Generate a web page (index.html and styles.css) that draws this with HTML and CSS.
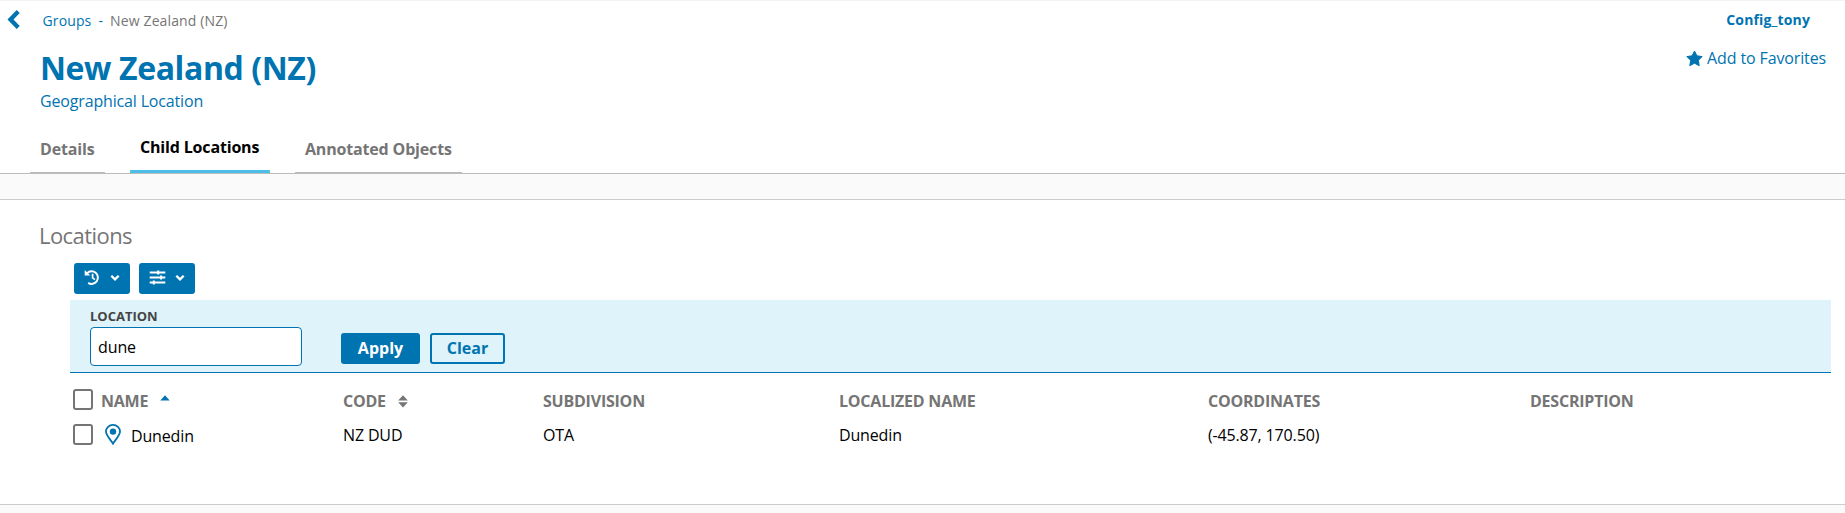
FILE: index.html
```html
<!DOCTYPE html>
<html lang="en">
<head>
<meta charset="utf-8">
<title>New Zealand (NZ)</title>
<link rel="stylesheet" href="styles.css">
</head>
<body>
<header class="page-header">
  <div class="topbar">
    <a class="back" aria-label="Back"><svg width="13" height="21" viewBox="0 0 13 21"><path d="M11.200 2.600 3.500 10.500l7.700 7.900" fill="none" stroke="currentColor" stroke-width="4.300"/></svg></a>
    <nav class="crumbs"><a>Groups</a><span class="dash">-</span><span class="current">New Zealand (NZ)</span></nav>
    <a class="user">Config_tony</a>
  </div>
  <div class="heading">
    <div>
      <h1 class="title">New Zealand (NZ)</h1>
      <div class="subtitle">Geographical Location</div>
    </div>
    <a class="favorite"><svg width="17" height="17" viewBox="0 0 17 17"><path d="M8.500 1 10.900 5.800 16.100 6.600 12.400 10.300 13.200 15.700 8.500 13.200 3.800 15.700 4.600 10.300 .9 6.600 6.100 5.800Z" fill="currentColor" stroke="currentColor" stroke-width="1" stroke-linejoin="round"/></svg>Add to Favorites</a>
  </div>
  <nav class="tabs">
    <a class="tab details">Details</a>
    <a class="tab children active">Child Locations</a>
    <a class="tab annotated">Annotated Objects</a>
  </nav>
</header>
<main class="panel">
  <h2 class="section-title">Locations</h2>
  <div class="toolbar">
    <button class="tool" aria-label="History"><svg width="17" height="17" viewBox="0 0 17 17"><path d="M3.100 4.200A6.300 6.300 0 1 1 4.200 13.900" fill="none" stroke="currentColor" stroke-width="2"/><path d="M.7 1v5.600h5.600Z" fill="currentColor"/><path d="M8.600 4.800v4l2.300 1.800" fill="none" stroke="currentColor" stroke-width="1.700"/></svg><svg class="chevron" width="10" height="8" viewBox="0 0 10 8"><path d="m1.300 1.700 3.700 3.600 3.700-3.600" fill="none" stroke="currentColor" stroke-width="2.300"/></svg></button>
    <button class="tool" aria-label="Filters"><svg width="17" height="17" viewBox="0 0 17 17"><path d="M.7 3.500h15.600M.7 8.500h15.600M.7 13.500h15.600" stroke="currentColor" stroke-width="1.800"/><path d="M9.200 1.600v3.800M12.100 6.600v3.800M4.800 11.600v3.800" stroke="currentColor" stroke-width="2"/></svg><svg class="chevron" width="10" height="8" viewBox="0 0 10 8"><path d="m1.300 1.700 3.700 3.600 3.700-3.600" fill="none" stroke="currentColor" stroke-width="2.300"/></svg></button>
  </div>
  <form class="filter">
    <div class="field">
      <label class="label" for="loc">LOCATION</label>
      <input class="input" id="loc" type="text" value="dune">
    </div>
    <button class="btn apply" type="button">Apply</button>
    <button class="btn clear" type="button">Clear</button>
  </form>
  <div class="table">
    <div class="row head">
      <div class="cell name"><span class="check"></span><span>NAME</span><svg class="asc" width="10" height="6" viewBox="0 0 10 6"><path d="M.3 5.500 5 .2l4.700 5.300Z" fill="currentColor"/></svg></div>
      <div class="cell">CODE<svg class="sort" width="10" height="13" viewBox="0 0 10 13"><path d="M.2 5.600 5 .2l4.800 5.400ZM.2 7.200h9.600L5 12.600Z" fill="currentColor"/></svg></div>
      <div class="cell">SUBDIVISION</div>
      <div class="cell">LOCALIZED NAME</div>
      <div class="cell">COORDINATES</div>
      <div class="cell">DESCRIPTION</div>
    </div>
    <div class="row">
      <div class="cell name"><span class="check"></span><svg class="pin" width="16" height="21" viewBox="0 0 16 21"><path d="M8 19.700C6.500 16.700 1 11.800 1 7.600a7 6.700 0 0 1 14 0c0 4.200-5.500 9.100-7 12.100Z" fill="none" stroke="currentColor" stroke-width="1.800"/><circle cx="8" cy="7.600" r="3.200" fill="currentColor"/></svg><span class="place">Dunedin</span></div>
      <div class="cell">NZ DUD</div>
      <div class="cell">OTA</div>
      <div class="cell">Dunedin</div>
      <div class="cell">(-45.87, 170.50)</div>
      <div class="cell"></div>
    </div>
  </div>
</main>
</body>
</html>
```
FILE: styles.css
```css
* { box-sizing: border-box; }
body {
  margin: 0;
  height: 513px;
  overflow: hidden;
  background: #fafafa;
  color: #000;
  font: 16px/22px "Open Sans", sans-serif;
}
h1, h2 { margin: 0; }
svg { display: block; flex: none; }
button { font: inherit; border: 0; margin: 0; padding: 0; }

.page-header {
  height: 174px;
  background: #fff;
  border-top: 1px solid #f3f3f3;
  border-bottom: 1px solid #bbb;
  color: #0073b1;
}
.topbar { display: flex; height: 45px; padding: 8px 35px 0 7px; }
.back { width: 35.5px; }
.crumbs { display: flex; font-size: 14px; line-height: 20px; padding-top: 2px; letter-spacing: .13px; }
.dash { margin: 0 7px; }
.current { color: #757575; }
.user { margin-left: auto; font-size: 14px; font-weight: 700; line-height: 20px; padding-top: 1px; letter-spacing: .15px; }
.heading { display: flex; justify-content: space-between; height: 86px; padding: 0 19px 0 40px; }
.title { font-size: 32px; line-height: 44px; font-weight: 700; letter-spacing: -.4px; }
.subtitle { line-height: 22px; letter-spacing: -.16px; }
.favorite { display: flex; gap: 4px; height: 22px; margin-top: 1px; letter-spacing: -.13px; }
.favorite svg { margin-top: 3px; }
.tabs { display: flex; align-items: flex-start; gap: 25px; padding-left: 30px; height: 41px; }
.tab {
  height: 41px;
  padding: 6px 10px 0;
  border-bottom: 1px solid #bbb;
  font-weight: 700;
  letter-spacing: -.17px;
  white-space: nowrap;
  color: #757575;
}
.details { width: 75px; }
.children { width: 140px; }
.annotated { width: 167px; }
.tab.active { padding-top: 4px; border-bottom: 3px solid #4dbde9; color: #000; }

.panel {
  height: 306px;
  margin-top: 25px;
  padding: 20px 14px 0 70px;
  background: #fff;
  border-top: 1px solid #ccc;
  border-bottom: 1px solid #ccc;
}
.section-title { margin-left: -31px; font-size: 22px; line-height: 30px; font-weight: 400; letter-spacing: -.56px; color: #757575; }
.toolbar { display: flex; gap: 9px; padding: 13px 4px 6px; }
.tool {
  display: flex;
  gap: 9px;
  width: 56px;
  height: 31px;
  padding: 6px 0 0 10px;
  border-radius: 3px;
  background: #0073b1;
  color: #fff;
}
.chevron { margin-top: 5px; }
.filter {
  display: flex;
  height: 73px;
  padding-left: 20px;
  background: #dff3fb;
  border-bottom: 1px solid #0073b1;
}
.field { width: 212px; margin-right: 39px; padding-top: 7px; }
.label { display: block; height: 20px; font-size: 13px; line-height: 18px; font-weight: 700; color: #444; }
.input {
  display: block;
  width: 212px;
  height: 39px;
  padding: 0 7px;
  border: 1px solid #0073b1;
  border-radius: 4px;
  background: #fff;
  font: inherit;
  letter-spacing: -.1px;
  color: #000;
}
.btn { height: 31px; margin-top: 33px; padding-bottom: 2px; border-radius: 3px; font-weight: 700; }
.apply { width: 79px; margin-right: 10px; background: #0073b1; color: #fff; }
.clear { width: 75px; border: 2px solid #0073b1; background: transparent; color: #0073b1; }

.table { padding-top: 16px; }
.row { display: grid; grid-template-columns: 273px 200px 296px 369px 322px 1fr; height: 35px; letter-spacing: -.15px; }
.head { color: #757575; font-weight: 700; letter-spacing: -.22px; }
.cell { display: flex; }
.head .cell { padding-top: 1px; }
.name, .head .name { padding: 0 0 0 3px; }
.check { width: 20px; height: 21px; margin-right: 8px; border: 2px solid #757575; border-radius: 3px; background: #fff; }
.head .check + span { padding-top: 1px; }
.asc { margin: 6px 0 0 12px; color: #0073b1; }
.sort { margin: 5px 0 0 12px; }
.pin { margin-left: 4px; color: #0073b1; }
.place { margin-left: 10px; padding-top: 1px; }
```
